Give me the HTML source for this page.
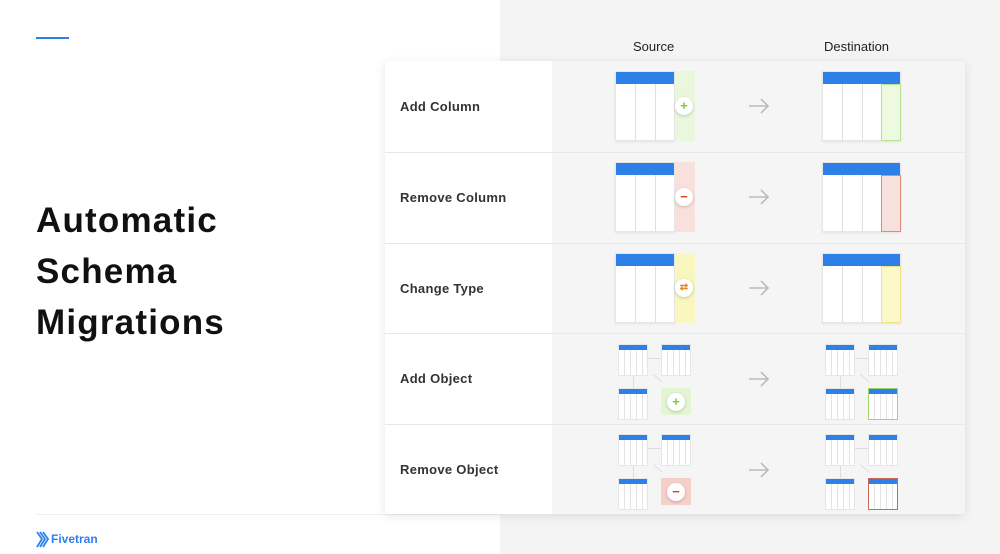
<!DOCTYPE html><html><head><style>
*{margin:0;padding:0;box-sizing:border-box}
body{width:1000px;height:554px;position:relative;overflow:hidden;background:#fff;font-family:"Liberation Sans",sans-serif}
.a{position:absolute}
.tb{position:absolute;width:79px;height:70px;background:#fff;border:1px solid #e6e6e6;box-shadow:0 1px 2px rgba(0,0,0,.08);
background-image:linear-gradient(#2f7fe9,#2f7fe9);background-size:100% 12px;background-repeat:no-repeat}
.tb i{position:absolute;top:12px;bottom:0;width:1px;background:#e0e0e0}
.ex{position:absolute;width:20px;height:70px}
.circ{position:absolute;width:18px;height:18px;border-radius:50%;background:#fff;box-shadow:0 1px 3px rgba(0,0,0,.2);font:bold 13px/18px "Liberation Sans",sans-serif;text-align:center}
.arr{position:absolute;width:22px;height:16px}
.st{position:absolute;width:30px;height:32px;background:#fff;border:1px solid #e6e6e6;
background-image:linear-gradient(#2f7fe9,#2f7fe9),repeating-linear-gradient(90deg,transparent 0 5px,#e4e4e4 5px 6px);background-size:100% 5px,100% 100%;background-repeat:no-repeat}
.lbl{position:absolute;left:400px;font-size:13px;color:#333;font-weight:bold;letter-spacing:.3px}
.ln{position:absolute;background:#ddd}
</style></head><body>
<div class="a" style="left:500px;top:0;width:500px;height:554px;background:#f4f4f4"></div>
<div class="a" style="left:36px;top:37px;width:33px;height:2px;background:#2f7fe9"></div>
<div class="a" style="left:36px;top:195px;font-size:35px;font-weight:bold;line-height:51px;color:#111;letter-spacing:1.2px">Automatic<br>Schema<br>Migrations</div>
<div class="a" style="left:36px;top:514px;width:464px;height:1px;background:#eee"></div>
<svg class="a" style="left:36px;top:531px" width="13" height="17" viewBox="0 0 13 17"><path d="M1 1l5 7-5 8M4 1l5 7-5 8M7 1l5 7-5 8" stroke="#2f7fe9" stroke-width="1.8" fill="none"/></svg>
<div class="a" style="left:51px;top:532px;font-size:12px;font-weight:bold;color:#2f7fe9">Fivetran</div>
<div class="a" style="left:633px;top:39px;font-size:13px;color:#222">Source</div>
<div class="a" style="left:824px;top:39px;font-size:13px;color:#222">Destination</div>
<div class="a" style="left:385px;top:61px;width:580px;height:453px;background:#f5f5f5;box-shadow:0 2px 10px rgba(0,0,0,.1);border-radius:3px"></div>
<div class="a" style="left:385px;top:61px;width:167px;height:453px;background:#fff"></div>
<div class="a" style="left:385px;top:152px;width:580px;height:1px;background:#e8e8e8"></div>
<div class="a" style="left:385px;top:243px;width:580px;height:1px;background:#e8e8e8"></div>
<div class="a" style="left:385px;top:333px;width:580px;height:1px;background:#e8e8e8"></div>
<div class="a" style="left:385px;top:424px;width:580px;height:1px;background:#e8e8e8"></div>
<div class="lbl" style="top:99px">Add Column</div>
<div class="lbl" style="top:190px">Remove Column</div>
<div class="lbl" style="top:281px">Change Type</div>
<div class="lbl" style="top:371px">Add Object</div>
<div class="lbl" style="top:462px">Remove Object</div>

<!-- row1 -->
<div class="tb" style="left:615px;top:71px;width:60px"><i style="left:19px"></i><i style="left:39px"></i></div>
<div class="ex" style="left:675px;top:71px;background:#eaf7dd"></div>
<div class="circ" style="left:675px;top:97px;color:#7cc943">+</div>
<svg class="arr" style="left:748px;top:98px" viewBox="0 0 22 16"><path d="M1 8H20M13 1l7 7-7 7" stroke="#bbb" stroke-width="1.6" fill="none"/></svg>
<div class="tb" style="left:822px;top:71px"><i style="left:19px"></i><i style="left:39px"></i><div class="a" style="left:58px;top:12px;width:20px;height:57px;background:#eefadf;border:1px solid #b9e38f"></div></div>
<!-- row2 -->
<div class="tb" style="left:615px;top:162px;width:60px"><i style="left:19px"></i><i style="left:39px"></i></div>
<div class="ex" style="left:675px;top:162px;background:#f8e1dc"></div>
<div class="circ" style="left:675px;top:188px;color:#d9412b">&minus;</div>
<svg class="arr" style="left:748px;top:189px" viewBox="0 0 22 16"><path d="M1 8H20M13 1l7 7-7 7" stroke="#bbb" stroke-width="1.6" fill="none"/></svg>
<div class="tb" style="left:822px;top:162px"><i style="left:19px"></i><i style="left:39px"></i><div class="a" style="left:58px;top:12px;width:20px;height:57px;background:#f8e1dc;border:1px solid #e08a7c"></div></div>
<!-- row3 -->
<div class="tb" style="left:615px;top:253px;width:60px"><i style="left:19px"></i><i style="left:39px"></i></div>
<div class="ex" style="left:675px;top:253px;background:#faf6bf"></div>
<div class="circ" style="left:675px;top:279px;color:#e08a2b;font-size:10px">&#8644;</div>
<svg class="arr" style="left:748px;top:280px" viewBox="0 0 22 16"><path d="M1 8H20M13 1l7 7-7 7" stroke="#bbb" stroke-width="1.6" fill="none"/></svg>
<div class="tb" style="left:822px;top:253px"><i style="left:19px"></i><i style="left:39px"></i><div class="a" style="left:58px;top:12px;width:20px;height:57px;background:#fbf8c9;border:1px solid #ede38a"></div></div>
<!-- row4 -->
<div class="ln" style="left:633px;top:376px;width:1px;height:12px"></div><div class="ln" style="left:648px;top:358px;width:13px;height:1px"></div>
<div class="ln" style="left:652px;top:378px;width:12px;height:1px;transform:rotate(40deg)"></div>
<div class="st" style="left:618px;top:344px"></div><div class="st" style="left:661px;top:344px"></div><div class="st" style="left:618px;top:388px"></div>
<div class="a" style="left:661px;top:388px;width:30px;height:27px;background:#e3f5d2"></div>
<div class="circ" style="left:667px;top:393px;color:#7cc943">+</div>
<svg class="arr" style="left:748px;top:371px" viewBox="0 0 22 16"><path d="M1 8H20M13 1l7 7-7 7" stroke="#bbb" stroke-width="1.6" fill="none"/></svg>
<div class="ln" style="left:840px;top:376px;width:1px;height:12px"></div><div class="ln" style="left:855px;top:358px;width:13px;height:1px"></div>
<div class="ln" style="left:859px;top:378px;width:12px;height:1px;transform:rotate(40deg)"></div>
<div class="st" style="left:825px;top:344px"></div><div class="st" style="left:868px;top:344px"></div><div class="st" style="left:825px;top:388px"></div>
<div class="st" style="left:868px;top:388px;border-color:#9ed66b"></div>
<!-- row5 -->
<div class="ln" style="left:633px;top:466px;width:1px;height:12px"></div><div class="ln" style="left:648px;top:448px;width:13px;height:1px"></div>
<div class="ln" style="left:652px;top:468px;width:12px;height:1px;transform:rotate(40deg)"></div>
<div class="st" style="left:618px;top:434px"></div><div class="st" style="left:661px;top:434px"></div><div class="st" style="left:618px;top:478px"></div>
<div class="a" style="left:661px;top:478px;width:30px;height:27px;background:#f5d0c9"></div>
<div class="circ" style="left:667px;top:483px;color:#d9412b">&minus;</div>
<svg class="arr" style="left:748px;top:462px" viewBox="0 0 22 16"><path d="M1 8H20M13 1l7 7-7 7" stroke="#bbb" stroke-width="1.6" fill="none"/></svg>
<div class="ln" style="left:840px;top:466px;width:1px;height:12px"></div><div class="ln" style="left:855px;top:448px;width:13px;height:1px"></div>
<div class="ln" style="left:859px;top:468px;width:12px;height:1px;transform:rotate(40deg)"></div>
<div class="st" style="left:825px;top:434px"></div><div class="st" style="left:868px;top:434px"></div><div class="st" style="left:825px;top:478px"></div>
<div class="st" style="left:868px;top:478px;border-color:#c9695a;background-image:linear-gradient(#2f7fe9,#2f7fe9),repeating-linear-gradient(90deg,transparent 0 5px,#e4e4e4 5px 6px);background-size:100% 5px,100% 100%"></div>
</body></html>
